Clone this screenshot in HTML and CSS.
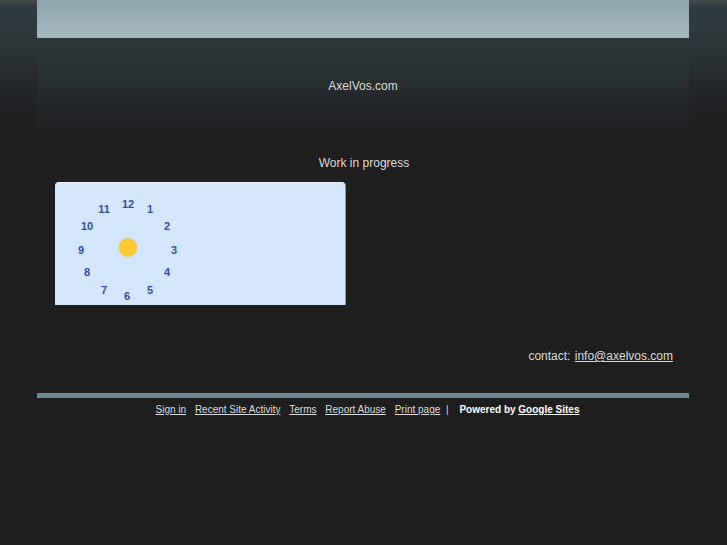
FILE: index.html
```html
<!DOCTYPE html>
<html>
<head>
<meta charset="utf-8">
<link rel="stylesheet" href="styles.css">
</head>
<body>
<div class="page">
  <div class="topband"></div>
  <div class="header"><span class="title">AxelVos.com</span></div>
  <div class="content">
    <p class="wip">Work in progress</p>
    <div class="gadget">
      <svg class="clock" width="290" height="123" viewBox="0 0 290 123">
        <g class="nums">
          <text x="73" y="26">12</text>
          <text x="95" y="31">1</text>
          <text x="112" y="48">2</text>
          <text x="119" y="72">3</text>
          <text x="112" y="94">4</text>
          <text x="95" y="112">5</text>
          <text x="72" y="118">6</text>
          <text x="49" y="112">7</text>
          <text x="32" y="94">8</text>
          <text x="26" y="72">9</text>
          <text x="32" y="48">10</text>
          <text x="49" y="31">11</text>
        </g>
        <circle cx="73" cy="65.5" r="9" fill="#fcc832" stroke="#e8c250" stroke-width="0.8"/>
      </svg>
    </div>
    <p class="contact">contact: <a href="#">info@axelvos.com</a></p>
  </div>
  <div class="footbar"></div>
  <div class="footer">
    <a href="#">Sign in</a>
    <a href="#">Recent Site Activity</a>
    <a href="#">Terms</a>
    <a href="#">Report Abuse</a>
    <a href="#">Print page</a>
    <span class="sep">|</span>
    <span class="powered">Powered by <a href="#">Google Sites</a></span>
  </div>
</div>
</body>
</html>
```
FILE: styles.css
```css
html, body {
  margin: 0;
  padding: 0;
}
body {
  background: #1e1e1e linear-gradient(to bottom,
    #4b4d4e 0px, #3a4144 3px, #2e3a40 8px, #2f393d 30px,
    #2c3436 50px, #272d2f 70px, #222628 90px, #1f2122 110px, #1e1e1e 125px) no-repeat;
  background-size: 100% 130px;
  font-family: "Liberation Sans", Arial, sans-serif;
  color: #dddddd;
  height: 545px;
}
.page {
  width: 652px;
  margin-left: 37px;
}
.topband {
  height: 38px;
  background: linear-gradient(to bottom, #8ca3ac 0px, #93a9b1 10px, #a2b5bb 30px, #a3b6bc 38px);
}
.header {
  margin-top: 14px;
  height: 76px;
  background: linear-gradient(to bottom, #2c3538 0px, #283133 25px, #232729 50px, #202223 76px);
  display: flex;
  justify-content: center;
  align-items: center;
}
.title {
  font-size: 12px;
  color: #dcdcdc;
  margin-top: -8px;
}
.content {
  padding: 28px 16px 0 18px;
  height: 265px;
  box-sizing: border-box;
}
.wip {
  margin: 0;
  text-align: center;
  font-size: 12px;
  line-height: 14px;
  color: #dddddd;
}
.gadget {
  margin-top: 12px;
  width: 290px;
  height: 123px;
  background: #d4e6fb;
  border-radius: 4px 4px 0 0;
  border-top: 1px solid #eef5ff;
  box-sizing: border-box;
  box-shadow: 1px 0 0 #8a96a4;
}
.clock {
  display: block;
  margin-top: -1px;
}
.nums text {
  font-family: "Liberation Sans", Arial, sans-serif;
  font-size: 11px;
  font-weight: bold;
  fill: #2f4f9f;
  text-anchor: middle;
}
.contact {
  margin: 44px 0 0 0;
  text-align: right;
  font-size: 12px;
  line-height: 14px;
  color: #dddddd;
  word-spacing: 1px;
}
.contact a {
  color: #dddddd;
  word-spacing: 0;
}
.footbar {
  height: 5px;
  background: #6c8a95;
}
.footer {
  text-align: center;
  font-size: 10px;
  padding-top: 6px;
  padding-left: 6px;
  color: #dddddd;
}
.footer a {
  color: #dddddd;
  margin: 0 3px;
}
.footer .sep {
  margin: 0 8px 0 0;
}
.footer .powered {
  font-weight: bold;
  color: #ffffff;
}
.footer .powered a {
  color: #ffffff;
  margin: 0;
}
```
